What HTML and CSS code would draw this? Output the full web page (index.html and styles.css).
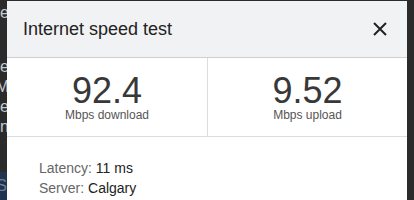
FILE: index.html
```html
<!DOCTYPE html>
<html>
<head>
<meta charset="utf-8">
<link rel="stylesheet" href="styles.css">
</head>
<body>
<div class="backdrop">
  <div class="bg-line bg-first">Share</div>
  <div class="bg-gap"></div>
  <div class="bg-line">More</div>
  <div class="bg-line">MM</div>
  <div class="bg-line">Line</div>
  <div class="bg-line">Run</div>
  <div class="bg-footer"><span class="bg-s">S</span></div>
</div>
<div class="dialog">
  <div class="dialog-header">
    <div class="dialog-title">Internet speed test</div>
    <div class="close" aria-label="Close">
      <svg width="14" height="14" viewBox="0 0 14 14"><path d="M1 1 L13 13 M13 1 L1 13" stroke="#222" stroke-width="2" fill="none"/></svg>
    </div>
  </div>
  <div class="stats">
    <div class="stat">
      <div class="stat-value">92.4</div>
      <div class="stat-label">Mbps download</div>
    </div>
    <div class="stat stat-right">
      <div class="stat-value">9.52</div>
      <div class="stat-label">Mbps upload</div>
    </div>
  </div>
  <div class="details">
    <div class="detail"><span class="detail-key">Latency:</span> <span class="detail-val">11 ms</span></div>
    <div class="detail"><span class="detail-key">Server:</span> <span class="detail-val">Calgary</span></div>
  </div>
</div>
</body>
</html>
```

FILE: styles.css
```css
html, body {
  margin: 0;
  padding: 0;
}
body {
  width: 414px;
  height: 200px;
  overflow: hidden;
  position: relative;
  background: #2b2b2b;
  font-family: "Liberation Sans", Arial, sans-serif;
}
.backdrop {
  width: 9px;
  height: 200px;
  display: flex;
  flex-direction: column;
  color: #c9c9c9;
  font-size: 16px;
  line-height: 20px;
}
.bg-line {
  display: flex;
  justify-content: flex-end;
  white-space: nowrap;
  height: 20px;
}
.bg-first {
  margin-top: 3px;
}
.bg-gap {
  height: 34px;
}
.bg-footer {
  margin-top: auto;
  height: 28px;
  width: 7px;
  background: #1f3450;
  color: #6f7f95;
  display: flex;
  justify-content: flex-end;
  align-items: center;
  overflow: hidden;
}
.dialog {
  position: absolute;
  left: 7px;
  top: 1px;
  width: 400px;
  height: 199px;
  overflow: hidden;
  background: #ffffff;
}
.dialog-header {
  height: 56px;
  border-bottom: 1px solid #cfcfcf;
  background: #f1f2f4;
  display: flex;
  align-items: center;
  justify-content: space-between;
  padding: 0 20px 0 16px;
}
.dialog-title {
  font-size: 18px;
  color: #222;
  padding-top: 1px;
}
.close {
  width: 14px;
  height: 14px;
  display: flex;
}
.stats {
  display: grid;
  grid-template-columns: 1fr 1fr;
  border-bottom: 1px solid #dcdcdc;
}
.stat {
  text-align: center;
  padding: 17px 0 14px;
}
.stat-right {
  border-left: 1px solid #dcdcdc;
}
.stat-value {
  font-size: 36px;
  line-height: 32px;
  color: #383838;
}
.stat-label {
  margin-top: 1px;
  font-size: 12px;
  line-height: 14px;
  color: #555;
}
.details {
  padding: 21px 32px 0;
  font-size: 14px;
  line-height: 20px;
}
.detail-key {
  color: #666;
}
.detail-val {
  color: #222;
}
```
